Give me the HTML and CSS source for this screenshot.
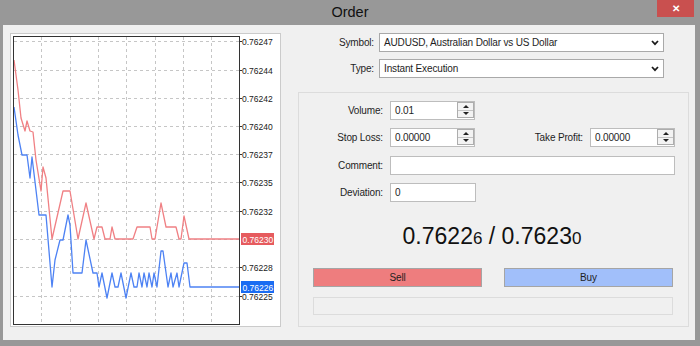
FILE: index.html
```html
<!DOCTYPE html>
<html>
<head>
<meta charset="utf-8">
<link rel="stylesheet" href="styles.css">
</head>
<body>
<div class="window">
  <div class="titlebar">
    <span></span>
    <span class="title">Order</span>
    <span class="close">&#x2715;</span>
  </div>
  <div class="content">
    <div class="chart">
      <svg width="269" height="292" viewBox="11 34 269 292" xmlns="http://www.w3.org/2000/svg">
        <g stroke="#c6c6c6" stroke-width="1" stroke-dasharray="3 3" fill="none">
          <line x1="41.5" y1="37" x2="41.5" y2="324"/>
          <line x1="70.5" y1="37" x2="70.5" y2="324"/>
          <line x1="98.5" y1="37" x2="98.5" y2="324"/>
          <line x1="126.5" y1="37" x2="126.5" y2="324"/>
          <line x1="155.5" y1="37" x2="155.5" y2="324"/>
          <line x1="183.5" y1="37" x2="183.5" y2="324"/>
          <line x1="211.5" y1="37" x2="211.5" y2="324"/>
          <line x1="14" y1="41.5" x2="239" y2="41.5"/>
          <line x1="14" y1="70.5" x2="239" y2="70.5"/>
          <line x1="14" y1="98.5" x2="239" y2="98.5"/>
          <line x1="14" y1="126.5" x2="239" y2="126.5"/>
          <line x1="14" y1="154.5" x2="239" y2="154.5"/>
          <line x1="14" y1="182.5" x2="239" y2="182.5"/>
          <line x1="14" y1="211.5" x2="239" y2="211.5"/>
          <line x1="14" y1="239.5" x2="239" y2="239.5"/>
          <line x1="14" y1="267.5" x2="239" y2="267.5"/>
          <line x1="14" y1="296.5" x2="239" y2="296.5"/>
        </g>
        <polyline fill="none" stroke="#f08084" stroke-width="1.3" stroke-linejoin="round"
          points="14,60 18,90 21,118 25,131 27,121 30,131 33,132 36,160 41,191 43,167 46,178 52,239 63,191 70,191 78,239 86,203 94,239 97,227 102,227 105,239 110,239 112,227 115,239 133,239 137,227 150,227 152,239 155,239 161,203 166,227 176,227 179,239 181,239 184,216 189,239 239,239"/>
        <polyline fill="none" stroke="#4d82f4" stroke-width="1.3" stroke-linejoin="round"
          points="14,107 18,135 22,155 27,155 30,178 32,157 39,215 46,215 52,287 55,260 60,240 63,240 68,215 70,225 73,273 82,273 86,240 93,273 97,273 99,287 102,273 107,298 112,273 115,287 118,287 121,273 126,298 131,273 134,287 137,287 139,273 142,287 144,273 147,287 149,273 152,287 154,273 157,287 161,251 163,251 168,287 171,273 173,287 177,273 179,287 184,263 187,263 190,287 239,287"/>
        <rect x="13.5" y="36.5" width="226" height="288" fill="none" stroke="#333" stroke-width="1"/>
        <g stroke="#333" stroke-width="1">
          <line x1="239" y1="41.5" x2="242" y2="41.5"/>
          <line x1="239" y1="70.5" x2="242" y2="70.5"/>
          <line x1="239" y1="98.5" x2="242" y2="98.5"/>
          <line x1="239" y1="126.5" x2="242" y2="126.5"/>
          <line x1="239" y1="154.5" x2="242" y2="154.5"/>
          <line x1="239" y1="182.5" x2="242" y2="182.5"/>
          <line x1="239" y1="211.5" x2="242" y2="211.5"/>
          <line x1="239" y1="267.5" x2="242" y2="267.5"/>
          <line x1="239" y1="296.5" x2="242" y2="296.5"/>
        </g>
        <g class="axis">
          <text x="242" y="44.5">0.76247</text>
          <text x="242" y="73.5">0.76244</text>
          <text x="242" y="101.5">0.76242</text>
          <text x="242" y="129.5">0.76240</text>
          <text x="242" y="157.5">0.76237</text>
          <text x="242" y="185.5">0.76235</text>
          <text x="242" y="214.5">0.76232</text>
          <text x="242" y="270.5">0.76228</text>
          <text x="242" y="299.5">0.76225</text>
        </g>
        <rect x="241" y="233" width="33" height="12" fill="#e65b5e"/>
        <text class="tag" x="242.5" y="242.5">0.76230</text>
        <rect x="241" y="281" width="33" height="12" fill="#1a6cf2"/>
        <text class="tag" x="242.5" y="290.5">0.76226</text>
      </svg>
    </div>
    <div class="form">
      <div class="toprow">
        <span class="toplabel">Symbol:</span>
        <div class="select">
          <span>AUDUSD, Australian Dollar vs US Dollar</span>
          <svg class="chev" width="8" height="6" viewBox="0 0 8 6"><polyline points="1,1 4,4.2 7,1" fill="none" stroke="#1a1a1a" stroke-width="1.7"/></svg>
        </div>
      </div>
      <div class="toprow second">
        <span class="toplabel">Type:</span>
        <div class="select">
          <span>Instant Execution</span>
          <svg class="chev" width="8" height="6" viewBox="0 0 8 6"><polyline points="1,1 4,4.2 7,1" fill="none" stroke="#1a1a1a" stroke-width="1.7"/></svg>
        </div>
      </div>
      <div class="group">
        <div class="row r1">
          <span class="lbl">Volume:</span>
          <div class="input">
            <span class="val">0.01</span>
            <span class="spinner"><span class="up"></span><span class="down"></span></span>
          </div>
        </div>
        <div class="row r2">
          <span class="lbl">Stop Loss:</span>
          <div class="input">
            <span class="val">0.00000</span>
            <span class="spinner"><span class="up"></span><span class="down"></span></span>
          </div>
          <div class="tp">
            <span class="tplbl">Take Profit:</span>
            <div class="input">
              <span class="val">0.00000</span>
              <span class="spinner"><span class="up"></span><span class="down"></span></span>
            </div>
          </div>
        </div>
        <div class="row r3">
          <span class="lbl">Comment:</span>
          <div class="input wide"></div>
        </div>
        <div class="row r4">
          <span class="lbl">Deviation:</span>
          <div class="input dev"><span class="val">0</span></div>
        </div>
        <div class="price">0.7622<span class="small">6</span> / 0.7623<span class="small">0</span></div>
        <div class="buttons">
          <div class="btn sell">Sell</div>
          <div class="btn buy">Buy</div>
        </div>
        <div class="status"></div>
      </div>
    </div>
  </div>
</div>
</body>
</html>
```

FILE: styles.css
```css
html, body {
  margin: 0;
  padding: 0;
}
body {
  width: 700px;
  height: 346px;
  background: #989898;
  font-family: "Liberation Sans", Arial, sans-serif;
  color: #1e1e1e;
  overflow: hidden;
}
.window {
  display: flex;
  flex-direction: column;
}
.titlebar {
  height: 25px;
  display: grid;
  grid-template-columns: 1fr auto 1fr;
  align-items: start;
}
.title {
  font-size: 14.5px;
  line-height: 25px;
  color: #111;
}
.close {
  justify-self: end;
  width: 37px;
  height: 17px;
  margin-right: 6px;
  background: #c9504f;
  color: #fff;
  font-size: 10px;
  line-height: 17px;
  text-align: center;
  font-weight: bold;
}
.content {
  margin: 0 5px 0 3px;
  height: 315px;
  background: #f0f0f0;
  box-sizing: border-box;
  padding: 8px 6px 0 7px;
  display: flex;
  align-items: flex-start;
}
.chart {
  width: 271px;
  height: 294px;
  box-sizing: border-box;
  border: 1px solid #cbcbcb;
  background: #fff;
  flex: none;
}
.chart svg {
  display: block;
}
.axis text {
  font-family: "Liberation Sans", Arial, sans-serif;
  font-size: 8.5px;
  fill: #1a1a1a;
}
.tag {
  font-family: "Liberation Sans", Arial, sans-serif;
  font-size: 8.5px;
  fill: #fff;
}
.form {
  margin-left: 17px;
  width: 391px;
  display: flex;
  flex-direction: column;
  font-size: 10px;
  letter-spacing: -0.15px;
}
.toprow {
  display: flex;
  align-items: center;
  height: 19px;
}
.toprow.second {
  margin-top: 7px;
}
.toplabel {
  width: 76px;
  margin-right: 5px;
  text-align: right;
}
.select {
  width: 285px;
  height: 19px;
  box-sizing: border-box;
  border: 1px solid #a9a9a9;
  background: #fff;
  display: flex;
  align-items: center;
  padding-left: 4px;
}
.chev {
  margin-left: auto;
  margin-right: 4px;
}
.group {
  margin-top: 14px;
  height: 235px;
  box-sizing: border-box;
  border: 1px solid #dcdcdc;
  padding: 8px 13px 0 0;
  display: flex;
  flex-direction: column;
}
.row {
  display: flex;
  align-items: center;
  height: 19px;
}
.r2 { margin-top: 8px; }
.r3 { margin-top: 9px; }
.r4 { margin-top: 8px; }
.lbl {
  width: 84px;
  margin-right: 7px;
  text-align: right;
}
.input {
  width: 85px;
  height: 19px;
  box-sizing: border-box;
  border: 1px solid #bdbdbd;
  background: #fff;
  display: flex;
  align-items: center;
  padding: 1px 0 1px 4px;
}
.input.wide { width: 285px; }
.input.dev { width: 86px; }
.val { flex: 1; }
.spinner {
  width: 17px;
  height: 16px;
  box-sizing: border-box;
  border: 1px solid #adadad;
  background: #f3f3f3;
  display: flex;
  flex-direction: column;
  align-self: flex-start;
  margin-top: -1px;
}
.spinner .up, .spinner .down {
  flex: 1;
  display: flex;
  align-items: center;
  justify-content: center;
}
.spinner .up {
  border-bottom: 1px solid #c4c4c4;
}
.spinner .up::after {
  content: "";
  border-left: 3px solid transparent;
  border-right: 3px solid transparent;
  border-bottom: 3px solid #222;
}
.spinner .down::after {
  content: "";
  border-left: 3px solid transparent;
  border-right: 3px solid transparent;
  border-top: 3px solid #222;
}
.tp {
  margin-left: auto;
  display: flex;
  align-items: center;
}
.tplbl {
  margin-right: 7px;
}
.price {
  margin-top: 23px;
  font-size: 23px;
  line-height: 23px;
  letter-spacing: 0;
  text-align: center;
  padding-left: 10px;
  color: #111;
}
.price .small {
  font-size: 17px;
}
.buttons {
  margin-top: 18px;
  margin-left: 14px;
  display: flex;
  gap: 22px;
}
.btn {
  width: 169px;
  height: 19px;
  box-sizing: border-box;
  border: 1px solid #a5a5a5;
  text-align: center;
  line-height: 17px;
  font-size: 10px;
  color: #1e1e1e;
}
.sell { background: #ee7d7e; }
.buy { background: #a1bffa; }
.status {
  margin-top: 10px;
  margin-left: 14px;
  width: 360px;
  height: 18px;
  box-sizing: border-box;
  border: 1px solid #dcdcdc;
  background: #f0f0f0;
}
```
